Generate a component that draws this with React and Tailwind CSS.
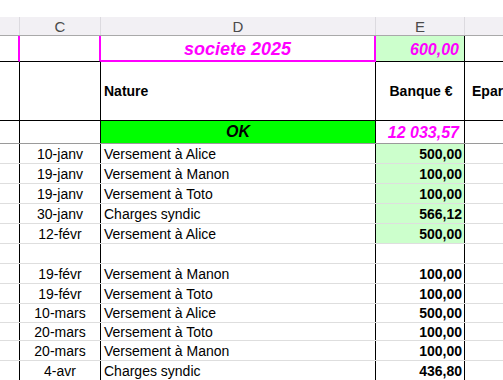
const ROWS = [
  { date: '10-janv', nature: 'Versement à Alice', banque: '500,00', green: true },
  { date: '19-janv', nature: 'Versement à Manon', banque: '100,00', green: true },
  { date: '19-janv', nature: 'Versement à Toto', banque: '100,00', green: true },
  { date: '30-janv', nature: 'Charges syndic', banque: '566,12', green: true },
  { date: '12-févr', nature: 'Versement à Alice', banque: '500,00', green: true },
  { date: '', nature: '', banque: '' },
  { date: '19-févr', nature: 'Versement à Manon', banque: '100,00' },
  { date: '19-févr', nature: 'Versement à Toto', banque: '100,00' },
  { date: '10-mars', nature: 'Versement à Alice', banque: '500,00', h: 'h-[19px]' },
  { date: '20-mars', nature: 'Versement à Toto', banque: '100,00', h: 'h-[18px]' },
  { date: '20-mars', nature: 'Versement à Manon', banque: '100,00' },
  { date: '4-avr', nature: 'Charges syndic', banque: '436,80' },
]

const font = { fontFamily: '"Liberation Sans", Arial, sans-serif' }

function DataRow({ r }) {
  return (
    <div className={`flex ${r.h || 'h-[20px]'} border-b border-[#dedede] text-[14px] text-black leading-none`}>
      <div className="w-[20px] shrink-0 border-r border-black" />
      <div className="w-[81px] shrink-0 border-r border-black flex items-center justify-center">{r.date}</div>
      <div className="w-[275px] shrink-0 border-r border-black flex items-center pl-[3px]">{r.nature}</div>
      <div className={`w-[89px] shrink-0 border-r border-black flex items-center justify-end pr-[2px] font-bold ${r.green ? 'bg-[#ccffcc]' : ''}`}>{r.banque}</div>
      <div className="flex-1" />
    </div>
  )
}

export default function App() {
  return (
    <div className="w-[503px] h-[380px] overflow-hidden bg-white" style={font}>
      <div className="h-[17px]" />

      {/* column letters */}
      <div className="flex h-[19px] bg-[#f2f0f4] border-b border-[#a9a9a9] text-[15px] text-[#4a4a4a] leading-none">
        <div className="w-[20px] shrink-0 border-r border-[#dcdadf]" />
        <div className="w-[81px] shrink-0 border-r border-[#dcdadf] flex items-center justify-center">C</div>
        <div className="w-[275px] shrink-0 border-r border-[#dcdadf] flex items-center justify-center">D</div>
        <div className="w-[89px] shrink-0 border-r border-[#dcdadf] flex items-center justify-center">E</div>
        <div className="flex-1" />
      </div>

      {/* societe row */}
      <div className="flex h-[26px] leading-none">
        <div className="w-[20px] shrink-0 border-r-2 border-r-[#ff00ff] border-b border-b-black" />
        <div className="w-[81px] shrink-0 border-r-2 border-r-[#ff00ff] border-b border-b-black" />
        <div className="w-[275px] shrink-0 border-r-2 border-r-[#ff00ff] border-b-2 border-b-[#ff00ff] flex items-center justify-center text-[18px] font-bold italic text-[#ff00ff] pt-[1px]">societe 2025</div>
        <div className="w-[89px] shrink-0 bg-[#ccffcc] border-r border-r-black border-b border-b-black flex items-end justify-end pr-[5px] pb-[3px] text-[16px] font-bold italic text-[#ff00ff]">600,00</div>
        <div className="flex-1 border-b border-b-black" />
      </div>

      {/* headers */}
      <div className="flex h-[59px] border-b border-black text-[14px] font-bold text-black leading-none">
        <div className="w-[20px] shrink-0 border-r border-black" />
        <div className="w-[81px] shrink-0 border-r border-black" />
        <div className="w-[275px] shrink-0 border-r border-black flex items-center pl-[3px]">Nature</div>
        <div className="w-[89px] shrink-0 border-r border-black flex items-center justify-center pl-[2px]">Banque €</div>
        <div className="flex-1 flex items-center pl-[7px] whitespace-nowrap overflow-hidden">Epargne</div>
      </div>

      {/* OK row */}
      <div className="flex h-[23px] border-b border-[#9a9a9a] leading-none">
        <div className="w-[20px] shrink-0 border-r border-black" />
        <div className="w-[81px] shrink-0 border-r border-black" />
        <div className="w-[275px] shrink-0 border-r border-black bg-[#00ff00] flex items-center justify-center text-[16px] font-bold italic text-black">OK</div>
        <div className="w-[89px] shrink-0 border-r border-black flex items-center justify-end pr-[5px] text-[16px] font-bold italic text-[#ff00ff] pt-[2px]">12 033,57</div>
        <div className="flex-1" />
      </div>

      {ROWS.map((r, i) => (
        <DataRow key={i} r={r} />
      ))}
    </div>
  )
}
